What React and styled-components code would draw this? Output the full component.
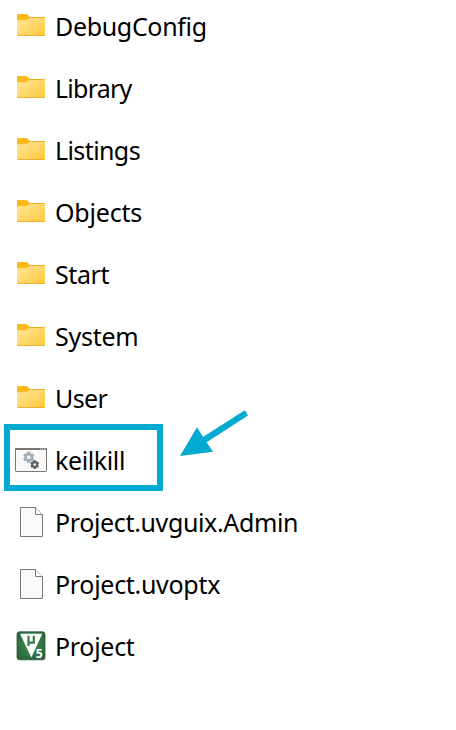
import React from "react";
import styled, { createGlobalStyle } from "styled-components";

const GlobalStyle = createGlobalStyle`
  * { box-sizing: border-box; }
  body { margin: 0; background: #fff; overflow: hidden; }
`;

const FileList = styled.ul`
  list-style: none;
  margin: 0;
  padding: 0;
  height: 730px;
  display: flex;
  flex-direction: column;
  gap: 8px;
  background: #fff;
  color: #000;
  font-family: "Noto Sans", "Open Sans", sans-serif;
  font-size: 25px;
`;

const Row = styled.li`
  position: relative;
  flex: none;
  height: 54px;
  padding-left: 15px;
  display: flex;
  align-items: center;
  gap: 8px;
`;

const Icon = styled.svg`
  display: block;
  flex: none;
  width: 32px;
  height: 32px;
`;

const Name = styled.span`
  line-height: 34px;
  padding-bottom: 2px;
  white-space: nowrap;
  letter-spacing: ${(p) => p.$tracking}px;
`;

const Highlight = styled.div`
  position: absolute;
  left: 4px;
  top: -10px;
  width: 159px;
  height: 67px;
  border: 6px solid #00aad0;
`;

const Arrow = styled.svg`
  position: absolute;
  left: 178px;
  top: -26px;
  width: 72px;
  height: 50px;
`;

const Digit = styled.text`
  font: bold 12px "Open Sans", sans-serif;
  fill: #fff;
`;

function FolderIcon() {
  return (
    <Icon viewBox="0 0 32 32">
      <defs>
        <linearGradient id="folderFront" x1="0" y1="0" x2="1" y2="1">
          <stop offset="0" stopColor="#ffe69c" />
          <stop offset="1" stopColor="#ffc938" />
        </linearGradient>
      </defs>
      <path d="M2 4q0-1 1-1h8q1 0 1.700.7L15 6H29q1 0 1 1v5H2z" fill="#fbb91b" />
      <path d="M2 9.300h8.500q1.200 0 2-.7L14.800 7H30v17q0 1-1 1H3q-1 0-1-1z" fill="url(#folderFront)" />
      <path d="M14 6.500h15.300" stroke="#e9ad25" />
      <path d="M2.500 24.500h27" stroke="#eab02f" />
    </Icon>
  );
}

const TEETH = [0, 60, 120, 180, 240, 300];

function Gear({ x, y, r, color }) {
  return (
    <g transform={`translate(${x} ${y})`}>
      {TEETH.map((a) => (
        <rect key={a} x={-r * 0.26} y={-r} width={r * 0.52} height={r * 0.6} fill={color} transform={`rotate(${a})`} />
      ))}
      <circle r={r * 0.56} fill="none" stroke={color} strokeWidth={r * 0.5} />
    </g>
  );
}

function BatchIcon() {
  return (
    <Icon viewBox="0 0 32 32">
      <rect x=".5" y="3.500" width="31" height="23" rx=".7" fill="#f9f9f9" stroke="#777672" />
      <path d="M0.300 4h31.400" stroke="#777672" strokeWidth="2" />
      <path d="M25 4h1M27 4h1M29 4h1" stroke="#eee" />
      <Gear x={13.700} y={12.300} r={5.700} color="#a7b0b8" />
      <Gear x={19.700} y={19.600} r={4.400} color="#596169" />
    </Icon>
  );
}

function DocumentIcon() {
  return (
    <Icon viewBox="0 0 32 32">
      <path d="M5.500.5H20.500L27.500 7.500V29.500H5.500z" fill="#f9f9f9" stroke="#777" />
      <path d="M20.500.5V7.500H27.500" fill="#fff" stroke="#777" />
    </Icon>
  );
}

function UVisionIcon() {
  return (
    <Icon viewBox="0 0 32 32">
      <defs>
        <radialGradient id="uvisionTile" cx=".5" cy=".45" r=".7">
          <stop offset="0" stopColor="#3c9153" />
          <stop offset="1" stopColor="#286038" />
        </radialGradient>
      </defs>
      <rect x="2" y=".8" width="28" height="28" rx="2.500" fill="url(#uvisionTile)" stroke="#2b5738" strokeWidth=".8" />
      <path d="M5 2.800H27.300L16.300 26.500z" fill="#fff" />
      <path d="M13.500 15V4.800M13.500 11.700H19.300M18.800 12.800V4.800" fill="none" stroke="#347d48" strokeWidth="2.200" />
      <Digit x="20.700" y="26.700">5</Digit>
    </Icon>
  );
}

const ICONS = {
  folder: FolderIcon,
  batch: BatchIcon,
  document: DocumentIcon,
  uvision: UVisionIcon,
};

const FILES = [
  { name: "DebugConfig", kind: "folder", tracking: -0.33 },
  { name: "Library", kind: "folder", tracking: -0.75 },
  { name: "Listings", kind: "folder", tracking: -0.6 },
  { name: "Objects", kind: "folder", tracking: -0.2 },
  { name: "Start", kind: "folder", tracking: -0.4 },
  { name: "System", kind: "folder", tracking: -0.25 },
  { name: "User", kind: "folder", tracking: -0.6 },
  { name: "keilkill", kind: "batch", tracking: -0.38, marked: true },
  { name: "Project.uvguix.Admin", kind: "document", tracking: -0.36 },
  { name: "Project.uvoptx", kind: "document", tracking: -0.3 },
  { name: "Project", kind: "uvision", tracking: -0.3 },
];

export default function App() {
  return (
    <>
      <GlobalStyle />
      <FileList>
        {FILES.map(({ name, kind, tracking, marked }) => {
          const KindIcon = ICONS[kind];
          return (
            <Row key={name}>
              <KindIcon />
              <Name $tracking={tracking}>{name}</Name>
              {marked && (
                <>
                  <Highlight />
                  <Arrow viewBox="0 0 72 50">
                    <path d="M2 48L19 19.300L25 29L66.800 2.300L70 7.400L28.600 34.300L35 43.800z" fill="#00aad0" />
                  </Arrow>
                </>
              )}
            </Row>
          );
        })}
      </FileList>
    </>
  );
}
